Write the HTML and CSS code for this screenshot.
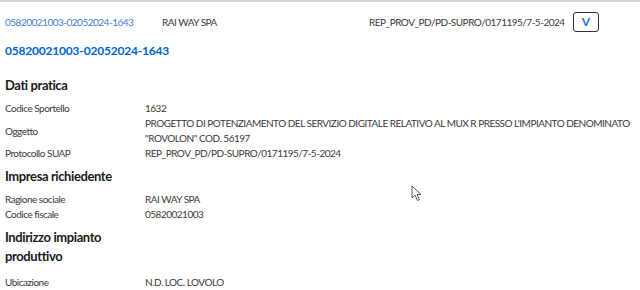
FILE: index.html
```html
<!DOCTYPE html>
<html>
  <head>
    <title>Pratica 05820021003-02052024-1643</title>
    <link rel="stylesheet" href="styles.css">
  </head>
  <body>
    <div class="pratica">
      <div class="summary">
        <a class="summary-code" href="#">05820021003-02052024-1643</a>
        <span class="summary-name">RAI WAY SPA</span>
        <span class="summary-prot">REP_PROV_PD/PD-SUPRO/0171195/7-5-2024</span>
        <button class="toggle">V</button>
      </div>

      <h2 class="pratica-title">05820021003-02052024-1643</h2>

      <h3 class="section-title">Dati pratica</h3>
      <div class="fields">
        <div class="label">Codice Sportello</div>
        <div class="value">1632</div>
        <div class="label">Oggetto</div>
        <div class="value">PROGETTO DI POTENZIAMENTO DEL SERVIZIO DIGITALE RELATIVO AL MUX R PRESSO L'IMPIANTO DENOMINATO "ROVOLON" COD. 56197</div>
        <div class="label">Protocollo SUAP</div>
        <div class="value">REP_PROV_PD/PD-SUPRO/0171195/7-5-2024</div>
      </div>

      <h3 class="section-title">Impresa richiedente</h3>
      <div class="fields">
        <div class="label">Ragione sociale</div>
        <div class="value">RAI WAY SPA</div>
        <div class="label">Codice fiscale</div>
        <div class="value">05820021003</div>
      </div>

      <h3 class="section-title section-title--wrap">Indirizzo impianto produttivo</h3>
      <div class="fields">
        <div class="label">Ubicazione</div>
        <div class="value">N.D. LOC. LOVOLO</div>
      </div>
    </div>

    <!-- mouse pointer from the screenshot -->
    <svg class="cursor" width="12" height="18" viewBox="0 0 12 18">
      <path d="M1 1 L1 13 L4 10 L6.5 15.5 L8.5 14.5 L6 9.5 L10 9.5 Z" fill="#fff" stroke="#555" stroke-width="1"/>
    </svg>
  </body>
</html>
```

FILE: styles.css
```css
body {
  margin: 0;
  background: #fff;
  color: #3a3a3a;
  font-family: Lato, sans-serif;
  font-size: 10px;
  letter-spacing: -0.5px;
  border-top: 2px solid #d4d4d4;
}

.pratica {
  padding: 0 5px;
}

.summary {
  display: flex;
  align-items: center;
  height: 39px;
  padding-right: 36px;
  white-space: nowrap;
}

.summary-code {
  width: 157px;
  flex: none;
  color: #3f7fd0;
  text-decoration: none;
}

.summary-name {
  width: 207px;
  flex: none;
}

.summary-prot {
  margin-left: auto;
  margin-right: 8px;
}

.toggle {
  width: 28px;
  height: 20px;
  padding: 0;
  background: #fff;
  border: 1.5px solid #333;
  border-radius: 3px;
  color: #1f6fd6;
  font-family: inherit;
  font-size: 12px;
  font-weight: 700;
}

.pratica-title {
  margin: 0 0 15px;
  color: #0066cc;
  font-size: 12px;
  letter-spacing: -0.2px;
  font-weight: 700;
  line-height: 20px;
}

.section-title {
  max-width: 135px;
  margin: 0 0 6px;
  color: #1a1a1a;
  font-size: 13px;
  letter-spacing: -0.4px;
  font-weight: 700;
  line-height: 19px;
}

.section-title--wrap {
  margin-bottom: 9px;
}

.fields {
  display: grid;
  grid-template-columns: 140px 1fr;
  align-items: center;
  line-height: 15px;
  margin-bottom: 6px;
}

.cursor {
  position: absolute;
  left: 411px;
  top: 185px;
}
```
